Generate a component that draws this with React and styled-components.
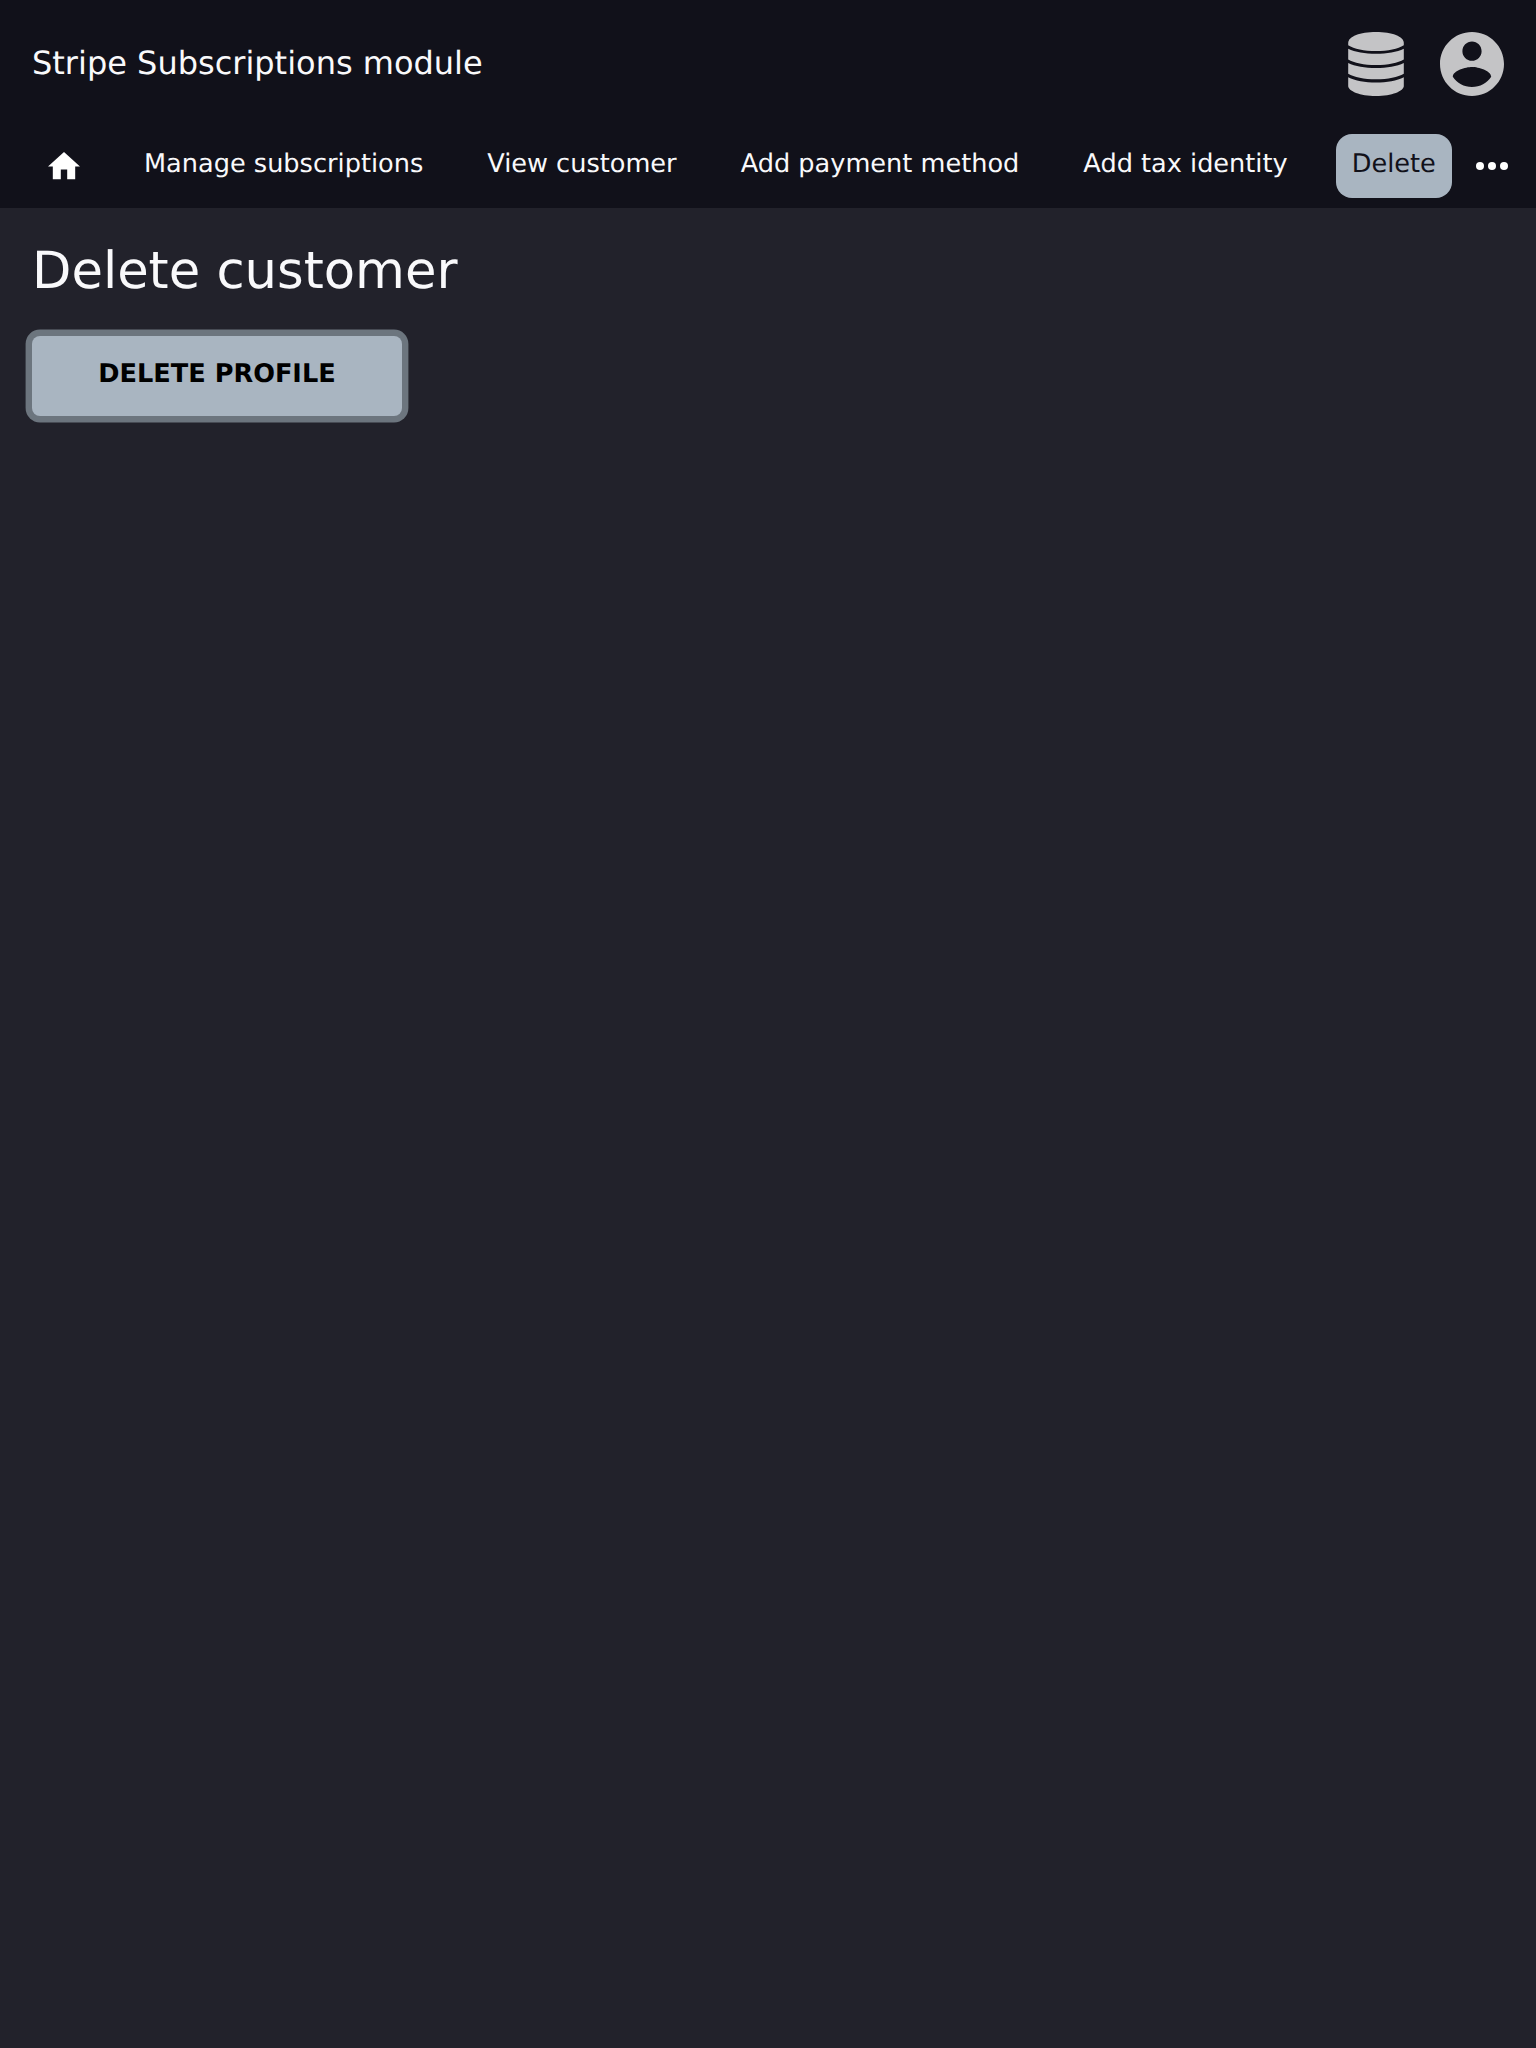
import React from "react";
import styled, { createGlobalStyle } from "styled-components";

const GlobalStyle = createGlobalStyle`
  *, *::before, *::after { box-sizing: border-box; }
  body {
    margin: 0;
    background: #22222b;
    color: #f9f9fb;
    font-family: "DejaVu Sans", sans-serif;
    font-size: 25.6px;
    text-rendering: geometricPrecision;
  }
`;

const Page = styled.div`
  display: flex;
  flex-direction: column;
  min-height: 100vh;
`;

const Header = styled.header`
  background: #11111a;
  height: 208px;
`;

const TitleBar = styled.div`
  display: flex;
  align-items: center;
  justify-content: space-between;
  height: 128px;
  padding: 0 32px;
`;

const ModuleTitle = styled.div`
  font-size: 32px;
  line-height: 48px;
  margin-bottom: 2px;
`;

const Actions = styled.div`
  display: flex;
  align-items: center;
  gap: 36px;
`;

const Icon = styled.svg`
  display: block;
  flex: none;
  width: ${(p) => p.$w}px;
  height: ${(p) => p.$h}px;
  fill: ${(p) => p.$color || "#fff"};
`;

const Nav = styled.nav`
  display: flex;
  gap: 32px;
  padding: 6px 28px 10px 32px;
`;

const NavLink = styled.a`
  display: flex;
  align-items: center;
  flex: none;
  height: 64px;
  padding: 0 16px 4px;
  border-radius: 16px;
  white-space: nowrap;
  color: ${(p) => (p.$active ? "#11111a" : "#f9f9fb")};
  background: ${(p) => (p.$active ? "#a9b5c1" : "transparent")};
`;

const IconLink = styled(NavLink)`
  padding-bottom: 0;
`;

const MoreButton = styled.span`
  display: flex;
  align-items: center;
  height: 64px;
  margin-left: -8px;
`;

const Content = styled.main`
  display: flex;
  flex-direction: column;
  align-items: flex-start;
  padding: 33px 32px 32px;
`;

const Heading = styled.h1`
  margin: 0 0 35px;
  font-size: 51.2px;
  font-weight: 400;
  line-height: 60px;
`;

const DeleteButton = styled.button`
  width: 370px;
  height: 80px;
  padding: 0 0 4px;
  border: 0;
  border-radius: 8px;
  background: #a9b5c1;
  box-shadow: 0 0 0 6.4px #6c757e;
  color: #000;
  font: 700 25.6px "DejaVu Sans", sans-serif;
  text-rendering: geometricPrecision;
  text-transform: uppercase;
`;

const links = ["Manage subscriptions", "View customer", "Add payment method", "Add tax identity", "Delete"];

export default function App() {
  return (
    <Page>
      <GlobalStyle />
      <Header>
        <TitleBar>
          <ModuleTitle>Stripe Subscriptions module</ModuleTitle>
          <Actions>
            <Icon $w={56} $h={64} $color="#c4c4c6" viewBox="0 0 56 64">
              <path d="M0.2 11C0.2 4.5 12 0 28 0s27.8 4.5 27.8 11v2.2C50 17 40 19 28 19S6 17 0.2 13.2Z" />
              <path d="M0.2 16.8C7 20 17 21.8 28 21.8s21-1.8 27.8-5v10.7C50 31 40 33 28 33S6 31 0.2 27.5Z" />
              <path d="M0.2 31C7 34.3 17 36.1 28 36.1s21-1.8 27.8-5.1v10.7C50 45.2 40 47.3 28 47.3S6 45.2 0.2 41.7Z" />
              <path d="M0.2 45.2C7 48.7 17 50.5 28 50.5s21-1.8 27.8-5.3V54C55.8 59 44 64 28 64S0.2 59 0.2 54Z" />
            </Icon>
            <Icon $w={64} $h={64} $color="#c4c4c6" viewBox="2 2 20 20">
              <path d="M12 2C6.48 2 2 6.48 2 12s4.48 10 10 10 10-4.48 10-10S17.52 2 12 2zm0 3c1.66 0 3 1.34 3 3s-1.34 3-3 3-3-1.34-3-3 1.34-3 3-3zm0 14.2c-2.5 0-4.71-1.28-6-3.22.03-1.99 4-3.08 6-3.08 1.99 0 5.97 1.09 6 3.08-1.29 1.94-3.5 3.22-6 3.22z" />
            </Icon>
          </Actions>
        </TitleBar>
        <Nav>
          <IconLink>
            <Icon $w={32} $h={27.2} viewBox="2 3 20 17">
              <path d="M10 20v-6h4v6h5v-8h3L12 3 2 12h3v8z" />
            </Icon>
          </IconLink>
          {links.map((label) => (
            <NavLink key={label} $active={label === "Delete"}>{label}</NavLink>
          ))}
          <MoreButton>
            <Icon $w={32} $h={8} viewBox="4 10 16 4">
              <circle cx="6" cy="12" r="2" />
              <circle cx="12" cy="12" r="2" />
              <circle cx="18" cy="12" r="2" />
            </Icon>
          </MoreButton>
        </Nav>
      </Header>
      <Content>
        <Heading>Delete customer</Heading>
        <DeleteButton>Delete profile</DeleteButton>
      </Content>
    </Page>
  );
}
